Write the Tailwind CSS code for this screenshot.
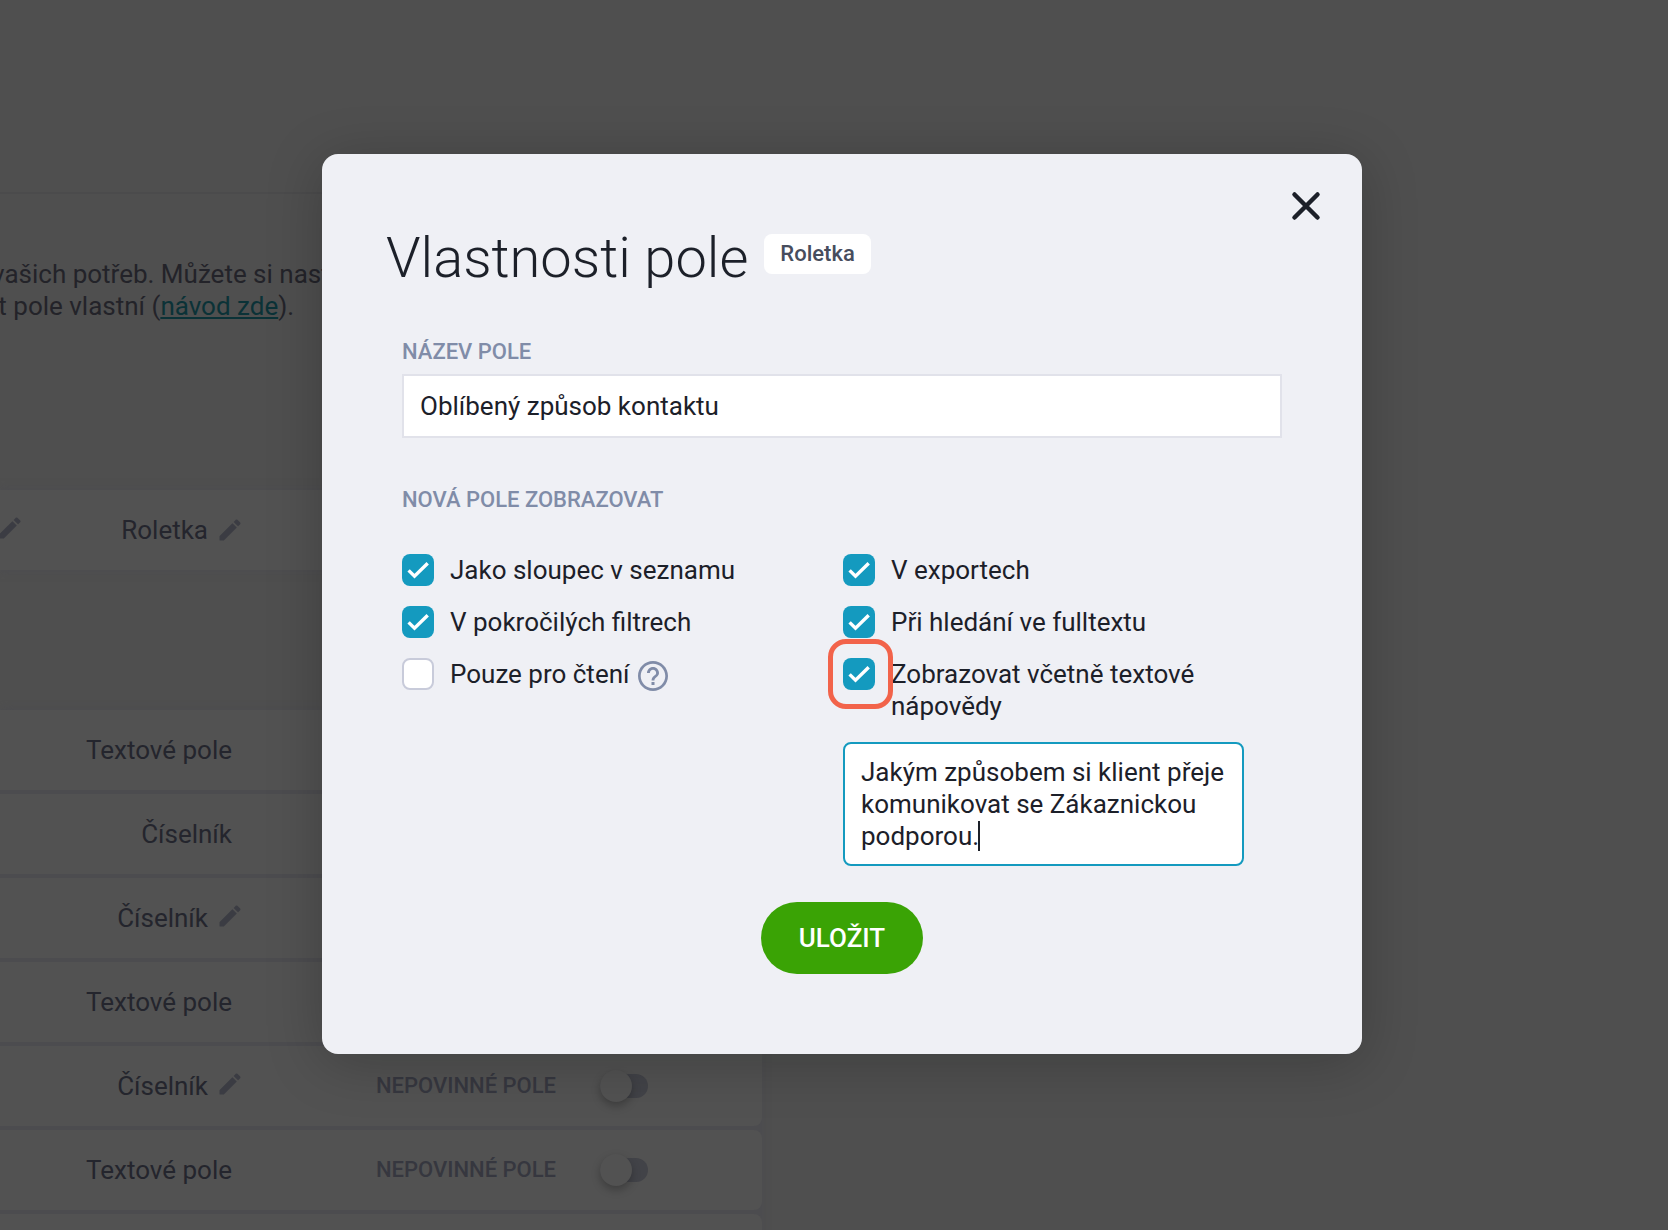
<!DOCTYPE html>
<html lang="cs">
<head>
<meta charset="utf-8">
<meta name="viewport" content="width=device-width, initial-scale=1">
<title>Vlastnosti pole</title>
<script src="https://cdn.jsdelivr.net/npm/@tailwindcss/browser@4"></script>
</head>
<body class="relative h-screen overflow-hidden bg-[#4f4f4f] font-[Roboto,sans-serif] text-[26px] leading-8 text-[#1c2029]">
<svg class="hidden" aria-hidden="true">
  <symbol id="pencil" viewBox="0 0 24 24"><path fill="currentColor" d="M3 17.46v3.04c0 .28.22.5.5.5h3.04c.13 0 .26-.05.35-.15L17.81 9.94l-3.75-3.75L3.15 17.1c-.1.1-.15.22-.15.36zM20.71 7.04a1 1 0 0 0 0-1.41l-2.34-2.34a1 1 0 0 0-1.41 0l-1.83 1.83 3.75 3.75 1.83-1.83z"/></symbol>
  <symbol id="check" viewBox="0 0 32 32"><path fill="none" stroke="#fff" stroke-width="3.400" d="M6.600 16.400 12.500 22.200 25.700 9.200"/></symbol>
</svg>

<!-- Page below the dialog -->
<main class="h-full overflow-hidden">
  <section class="mt-48 h-[298px] w-full max-w-[762px] border-t-2 border-[#4b4b4c] pt-16 text-[#232329]">
    <p class="-ml-2 whitespace-nowrap">vašich potřeb. Můžete si nastavit<br>it pole vlastní (<a href="#" class="text-[#0b3237] underline decoration-2 underline-offset-2">návod zde</a>).</p>
  </section>
  <section class="flex h-20 w-full max-w-[762px] items-center bg-[#525252] text-[#24252d] shadow-[0_0_8px_#4b4b50]">
    <button type="button" aria-label="Upravit" class="-ml-1 pb-1 text-[#3b3c43]"><svg class="size-7"><use href="#pencil"/></svg></button>
    <div class="flex w-[220px] items-center justify-end gap-2">Roletka<button type="button" aria-label="Upravit" class="text-[#3b3c43]"><svg class="size-7"><use href="#pencil"/></svg></button></div>
  </section>
  <ul class="mt-[140px] flex w-full max-w-[762px] flex-col gap-1 rounded-lg bg-[#4c4c4f] text-[#24252d] shadow-[0_0_8px_#4b4b50]">
    <li class="flex h-20 items-center rounded-r-lg bg-[#525252]"><span class="w-[232px] text-right">Textové pole</span></li>
    <li class="flex h-20 items-center rounded-r-lg bg-[#525252]"><span class="w-[232px] text-right">Číselník</span></li>
    <li class="flex h-20 items-center rounded-r-lg bg-[#525252]"><span class="flex w-[244px] items-center justify-end gap-2">Číselník<button type="button" aria-label="Upravit" class="pb-1 text-[#3b3c43]"><svg class="size-7"><use href="#pencil"/></svg></button></span></li>
    <li class="flex h-20 items-center rounded-r-lg bg-[#525252]"><span class="w-[232px] text-right">Textové pole</span></li>
    <li class="flex h-20 items-center justify-between rounded-r-lg bg-[#525252] pr-[114px]"><span class="flex w-[244px] items-center justify-end gap-2">Číselník<button type="button" aria-label="Upravit" class="pb-1 text-[#3b3c43]"><svg class="size-7"><use href="#pencil"/></svg></button></span>
      <label class="flex w-[272px] items-center justify-between text-[22px] font-medium text-[#36373f]">NEPOVINNÉ POLE
        <span class="relative flex h-6 w-12"><input type="checkbox" class="h-6 w-12 appearance-none rounded-full bg-[#424348]"><span class="absolute -top-1 left-0 size-8 rounded-full bg-[#525252] shadow-[0_4px_8px_rgba(0,0,0,0.25)]"></span></span></label></li>
    <li class="flex h-20 items-center justify-between rounded-r-lg bg-[#525252] pr-[114px]"><span class="w-[232px] text-right">Textové pole</span>
      <label class="flex w-[272px] items-center justify-between text-[22px] font-medium text-[#36373f]">NEPOVINNÉ POLE
        <span class="relative flex h-6 w-12"><input type="checkbox" class="h-6 w-12 appearance-none rounded-full bg-[#424348]"><span class="absolute -top-1 left-0 size-8 rounded-full bg-[#525252] shadow-[0_4px_8px_rgba(0,0,0,0.25)]"></span></span></label></li>
    <li class="h-20 rounded-r-lg bg-[#525252]"></li>
  </ul>
</main>

<!-- Dialog -->
<div class="absolute inset-0 flex items-start justify-center pt-[154px] pl-4">
  <form role="dialog" aria-labelledby="title" class="relative w-full max-w-[1040px] rounded-2xl bg-[#eff0f5] px-20 pt-[71px] pb-20 shadow-[0_8px_56px_rgba(0,10,0,0.22)]">
    <button type="button" aria-label="Zavřít" class="absolute top-8 right-9"><svg class="size-10" viewBox="0 0 40 40"><path fill="none" stroke="currentColor" stroke-width="4.500" stroke-linecap="round" d="M8.500 8.500l23 23M31.500 8.500l-23 23"/></svg></button>
    <header class="-ml-4 flex items-start gap-4">
      <h1 id="title" class="text-[56px] leading-[66px] font-light">Vlastnosti pole</h1>
      <span class="mt-[9px] flex h-10 items-center rounded-lg bg-white px-4 text-[22px] font-medium text-[#474d5d]">Roletka</span>
    </header>
    <label for="name" class="mt-[45px] block text-[22px] font-medium text-[#808ca8]">NÁZEV POLE</label>
    <input id="name" type="text" value="Oblíbený způsob kontaktu" class="mt-1.5 block h-16 w-full border-2 border-[#e1e2ea] bg-white px-4 outline-none">
    <h2 class="mt-[46px] text-[22px] font-medium text-[#808ca8]">NOVÁ POLE ZOBRAZOVAT</h2>
    <div class="mt-[38px] grid grid-cols-2 gap-x-0.5">
      <div class="flex flex-col gap-5">
        <label class="flex gap-4"><span class="relative size-8 shrink-0"><input type="checkbox" checked class="block size-8 appearance-none rounded-lg bg-[#149abf]"><svg class="pointer-events-none absolute inset-0 size-8"><use href="#check"/></svg></span>Jako sloupec v seznamu</label>
        <label class="flex gap-4"><span class="relative size-8 shrink-0"><input type="checkbox" checked class="block size-8 appearance-none rounded-lg bg-[#149abf]"><svg class="pointer-events-none absolute inset-0 size-8"><use href="#check"/></svg></span>V pokročilých filtrech</label>
        <div class="flex h-8 gap-1.5">
          <label class="flex gap-4"><input type="checkbox" class="block size-8 shrink-0 appearance-none rounded-lg border-2 border-[#c8cbda] bg-white">Pouze pro čtení</label>
          <button type="button" aria-label="Nápověda" class="size-9 text-[#808ca8]"><svg class="size-9" viewBox="0 0 24 24"><path fill="currentColor" d="M11 18h2v-2h-2v2zm1-16C6.480 2 2 6.480 2 12s4.480 10 10 10 10-4.480 10-10S17.520 2 12 2zm0 18.200c-4.520 0-8.200-3.680-8.200-8.200s3.680-8.200 8.200-8.200 8.200 3.680 8.200 8.200-3.680 8.200-8.200 8.200zM12 6c-2.210 0-4 1.790-4 4h1.900c0-1.160.940-2.100 2.100-2.100s2.100.940 2.100 2.100c0 1.900-3.050 1.750-3.050 5h1.900c0-2.250 3.050-2.500 3.050-5 0-2.210-1.790-4-4-4z"/></svg></button>
        </div>
      </div>
      <div class="flex flex-col gap-5 pr-[38px]">
        <label class="flex gap-4"><span class="relative size-8 shrink-0"><input type="checkbox" checked class="block size-8 appearance-none rounded-lg bg-[#149abf]"><svg class="pointer-events-none absolute inset-0 size-8"><use href="#check"/></svg></span>V exportech</label>
        <label class="flex gap-4"><span class="relative size-8 shrink-0"><input type="checkbox" checked class="block size-8 appearance-none rounded-lg bg-[#149abf]"><svg class="pointer-events-none absolute inset-0 size-8"><use href="#check"/></svg></span>Při hledání ve fulltextu</label>
        <label class="flex gap-4"><span class="relative size-8 shrink-0"><input type="checkbox" checked class="block size-8 appearance-none rounded-lg bg-[#149abf]"><svg class="pointer-events-none absolute inset-0 size-8"><use href="#check"/></svg><span class="absolute -top-[19px] -left-[15px] h-[70px] w-[65px] rounded-[18px] border-5 border-[#f2634a]"></span></span>Zobrazovat včetně textové nápovědy</label>
        <div class="relative">
          <textarea aria-label="Text nápovědy" rows="3" class="block h-[124px] w-full resize-none overflow-hidden rounded-lg border-2 border-[#149abf] bg-white px-4 py-3 outline-none">Jakým způsobem si klient přeje komunikovat se Zákaznickou podporou.</textarea>
          <span class="absolute top-[79px] left-[135px] h-[30px] w-0.5 bg-[#1c2029]"></span>
        </div>
      </div>
    </div>
    <button type="submit" class="mx-auto mt-9 flex h-[72px] w-[162px] items-center justify-center rounded-full bg-[#3aa305] font-medium text-white">ULOŽIT</button>
  </form>
</div>
</body>
</html>
